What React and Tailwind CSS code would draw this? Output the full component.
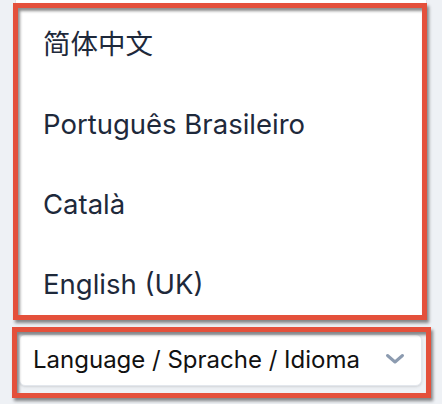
import React from "react";

const languages = ["简体中文", "Português Brasileiro", "Català", "English (UK)"];

// Red annotation frame drawn over the screenshot
const Frame = ({ className }) => (
  <div
    className={`pointer-events-none absolute border-[5px] border-[#e4503b] shadow-[2px_3px_3px_rgba(0,0,0,0.45),inset_2px_3px_3px_rgba(0,0,0,0.45)] ${className}`}
  />
);

const App = () => {
  return (
    <div
      className="relative h-[404px] w-[442px] overflow-hidden bg-[#eef1f5]"
      style={{ fontFamily: 'Inter, "Noto Sans CJK SC", sans-serif' }}
    >
      {/* dropdown list */}
      <div className="ml-[15px] h-[318px] w-[412px] overflow-hidden rounded-b-md border-x border-b border-[#dfe3ea] bg-white pt-[5px]">
        {languages.map((lang) => (
          <div
            key={lang}
            className="flex h-[80px] items-center pl-[27px] text-[27.5px] text-[#1e293b]"
          >
            {lang}
          </div>
        ))}
      </div>

      {/* select button */}
      <div className="ml-[19px] mt-[16px] flex h-[52px] w-[403px] items-center justify-between rounded-md border border-[#e3e7ed] bg-white pl-[13px] pr-[16px] shadow-sm">
        <span className="text-[24px] text-[#111111]">Language / Sprache / Idioma</span>
        <svg width="20" height="12" viewBox="0 0 20 12" fill="none" className="-mt-[2px]">
          <path d="M2.5 2.5l7.5 6.5 7.5-6.5" stroke="#8c9bb0" strokeWidth="3" strokeLinecap="round" strokeLinejoin="round" />
        </svg>
      </div>

      <Frame className="left-[13px] top-[3px] h-[317px] w-[414px]" />
      <Frame className="left-[12px] top-[327px] h-[71px] w-[419px]" />
    </div>
  );
};

export default App;
